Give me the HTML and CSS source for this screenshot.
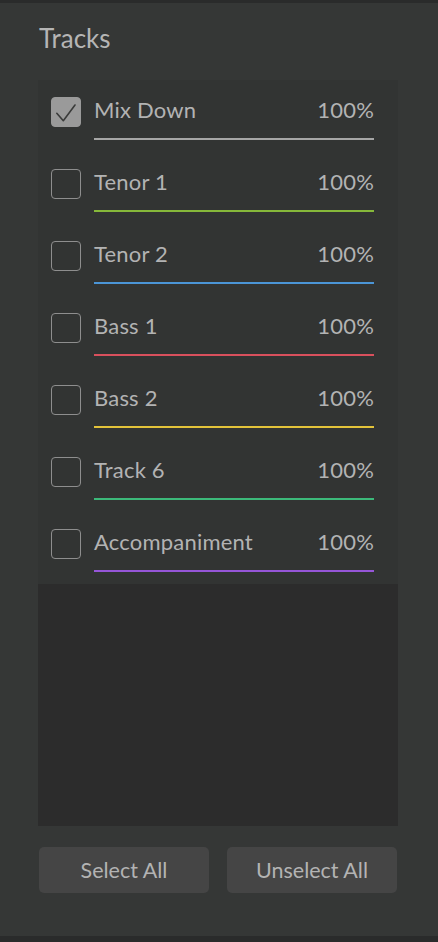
FILE: index.html
```html
<!DOCTYPE html>
<html>
<head>
<meta charset="utf-8">
<link rel="stylesheet" href="styles.css">
</head>
<body>
<div class="panel">
  <h1 class="title">Tracks</h1>
  <div class="box">
    <ul class="tracks">
      <li class="track">
        <span class="check checked"><svg viewBox="0 0 30 30" width="30" height="30"><path d="M5.8 16.3 L12.3 23.7 L24 8" fill="none" stroke="#3a3b3a" stroke-width="1.6" stroke-linecap="round" stroke-linejoin="round"/></svg></span>
        <div class="info"><div class="row"><span>Mix Down</span><span>100%</span></div><div class="bar c-mix"></div></div>
      </li>
      <li class="track">
        <span class="check"></span>
        <div class="info"><div class="row"><span>Tenor 1</span><span>100%</span></div><div class="bar c-t1"></div></div>
      </li>
      <li class="track">
        <span class="check"></span>
        <div class="info"><div class="row"><span>Tenor 2</span><span>100%</span></div><div class="bar c-t2"></div></div>
      </li>
      <li class="track">
        <span class="check"></span>
        <div class="info"><div class="row"><span>Bass 1</span><span>100%</span></div><div class="bar c-b1"></div></div>
      </li>
      <li class="track">
        <span class="check"></span>
        <div class="info"><div class="row"><span>Bass 2</span><span>100%</span></div><div class="bar c-b2"></div></div>
      </li>
      <li class="track">
        <span class="check"></span>
        <div class="info"><div class="row"><span>Track 6</span><span>100%</span></div><div class="bar c-t6"></div></div>
      </li>
      <li class="track">
        <span class="check"></span>
        <div class="info"><div class="row"><span>Accompaniment</span><span>100%</span></div><div class="bar c-acc"></div></div>
      </li>
    </ul>
    <div class="empty"></div>
  </div>
  <div class="buttons">
    <button class="btn">Select All</button>
    <button class="btn">Unselect All</button>
  </div>
</div>
</body>
</html>
```
FILE: styles.css
```css
html, body {
  margin: 0;
  padding: 0;
  background: #2a2b2b;
}
body {
  font-family: "Lato", "Noto Sans", sans-serif;
  color: #b3b3b3;
  width: 438px;
  height: 942px;
  overflow: hidden;
}
.panel {
  margin-top: 3px;
  height: 933px;
  background: #353736;
  display: flex;
  flex-direction: column;
  padding: 0 40px 0 38px;
  box-sizing: border-box;
}
.title {
  margin: 0;
  padding: 20px 0 0 1px;
  height: 77px;
  flex: none;
  box-sizing: border-box;
  font-size: 26px;
  font-weight: 400;
  color: #b5b5b5;
  line-height: 30px;
}
.box {
  height: 746px;
  flex: none;
  display: flex;
  flex-direction: column;
  background: #2c2c2c;
}
.tracks {
  list-style: none;
  margin: 0;
  padding: 0;
  background: #323433;
}
.track {
  height: 72px;
  display: flex;
  padding: 17px 24px 0 13px;
  box-sizing: border-box;
}
.check {
  width: 30px;
  height: 30px;
  box-sizing: border-box;
  border: 1px solid #8e8e8e;
  border-radius: 4px;
  flex: none;
}
.check.checked {
  background: #9a9a9a;
  border-color: #9a9a9a;
}
.check.checked svg {
  display: block;
  margin: -1px;
}
.info {
  flex: 1;
  margin-left: 13px;
  display: flex;
  flex-direction: column;
}
.row {
  display: flex;
  justify-content: space-between;
  font-size: 22px;
  line-height: 26px;
  height: 41px;
  box-sizing: border-box;
  padding-top: 0px;
  letter-spacing: 0.2px;
}
.bar {
  height: 2px;
}
.c-mix { background: #a6a6a6; }
.c-t1 { background: #86b83a; }
.c-t2 { background: #4b95d6; }
.c-b1 { background: #d9505d; }
.c-b2 { background: #e3c33a; }
.c-t6 { background: #3cb97a; }
.c-acc { background: #9656d8; }
.empty {
  flex: 1;
}
.buttons {
  display: flex;
  gap: 18px;
  margin-top: 21px;
  padding-left: 1px;
}
.btn {
  width: 170px;
  height: 46px;
  background: #454545;
  border: none;
  border-radius: 5px;
  color: #b3b3b3;
  font-family: "Lato", "Noto Sans", sans-serif;
  font-size: 21.5px;
  padding: 0;
}
```
